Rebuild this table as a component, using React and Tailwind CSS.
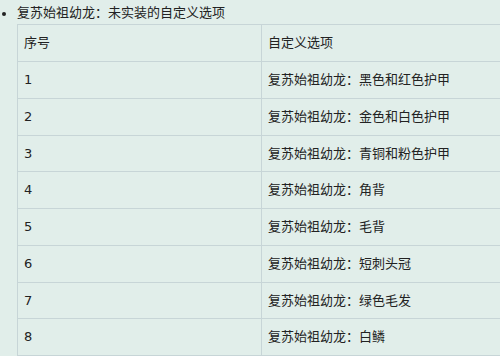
import React from 'react';

const rows = [
  '复苏始祖幼龙：黑色和红色护甲',
  '复苏始祖幼龙：金色和白色护甲',
  '复苏始祖幼龙：青铜和粉色护甲',
  '复苏始祖幼龙：角背',
  '复苏始祖幼龙：毛背',
  '复苏始祖幼龙：短刺头冠',
  '复苏始祖幼龙：绿色毛发',
  '复苏始祖幼龙：白鳞',
];

const App = () => {
  return (
    <div
      className="w-[500px] h-[356px] overflow-hidden bg-[#e1eeea] text-[13px] text-[#222222]"
      style={{ fontFamily: '"DejaVu Sans", "Noto Sans CJK SC", sans-serif' }}
    >
      <ul className="pt-[2px]">
        <li className="relative pl-[17px]">
          <span className="absolute left-[2px] top-[10px] w-[4px] h-[4px] rounded-full bg-[#222222]" />
          <div className="h-[21px] leading-[21px] whitespace-nowrap">复苏始祖幼龙：未实装的自定义选项</div>
          <div className="w-[520px] border-t border-l border-[#c7d5d7] mt-[1px]">
            <div className="flex h-[37px] border-b border-[#c7d5d7]">
              <div className="w-[243px] shrink-0 flex items-center pl-[6px]">序号</div>
              <div className="flex-1 flex items-center pl-[6px] border-l border-[#c7d5d7]">自定义选项</div>
            </div>
            {rows.map((text, i) => (
              <div key={i} className="flex h-[36.75px] border-b border-[#c7d5d7]">
                <div className="w-[243px] shrink-0 flex items-center pl-[6px]">{i + 1}</div>
                <div className="flex-1 flex items-center pl-[6px] border-l border-[#c7d5d7] whitespace-nowrap">{text}</div>
              </div>
            ))}
          </div>
        </li>
      </ul>
    </div>
  );
};

export default App;
